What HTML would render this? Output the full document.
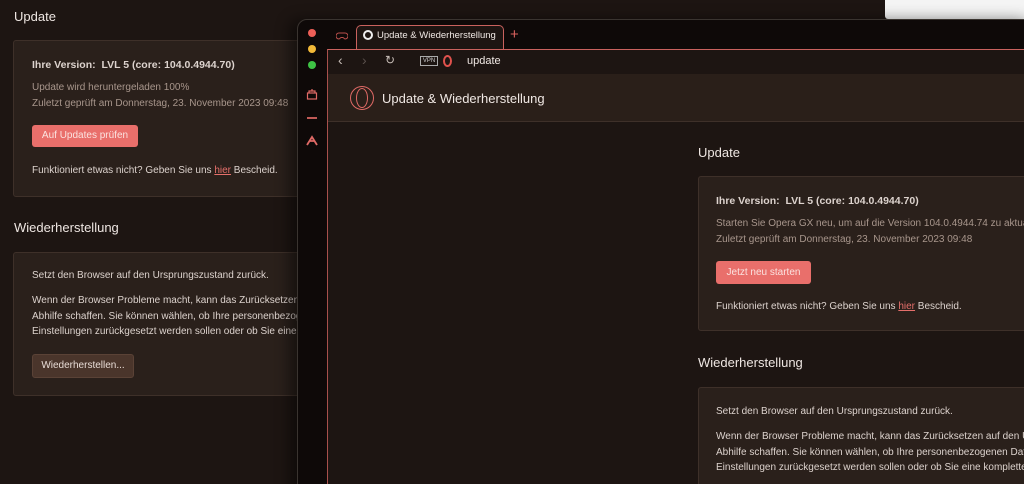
<!DOCTYPE html>
<html><head><meta charset="utf-8"><style>
*{margin:0;padding:0;box-sizing:border-box}
html,body{width:1024px;height:484px;overflow:hidden}
body{background:#1d1512;font-family:"Liberation Sans",sans-serif;color:#e8e0dc}
#wrap{position:relative;width:1024px;height:484px;overflow:hidden}
.abs{position:absolute}
.h{font-size:13px;color:#eee6e2}
.card{position:absolute;background:#2a201b;border:1px solid #3e3029;border-radius:3px}
.t{font-size:10px;line-height:16px;color:#ddd3ce;white-space:nowrap}
.g{color:#a8968c}
.b{font-weight:bold;font-size:10.5px}
.btn{position:absolute;background:#e96f6b;font-size:10px;border-radius:3px;text-align:center;color:#fbe3e0}
a{color:#e56f6b;text-decoration:underline}
</style></head><body><div id="wrap">
<div class="abs" style="left:885px;top:0;width:139px;height:19px;background:#f4f4f4;border-radius:0 0 0 3px"></div>
<div class="abs h" style="left:14px;top:9px">Update</div>
<div class="card" style="left:13px;top:40px;width:300px;height:157px"></div>
<div class="abs t b" style="left:32px;top:57px">Ihre Version:&nbsp; LVL 5 (core: 104.0.4944.70)</div>
<div class="abs t g" style="left:32px;top:80px">Update wird heruntergeladen 100%<br>Zuletzt geprüft am Donnerstag, 23. November 2023 09:48</div>
<div class="btn" style="left:32px;top:125px;width:106px;height:22px;line-height:22px">Auf Updates prüfen</div>
<div class="abs t" style="left:32px;top:163px">Funktioniert etwas nicht? Geben Sie uns <a>hier</a> Bescheid.</div>
<div class="abs h" style="left:14px;top:220px">Wiederherstellung</div>
<div class="card" style="left:13px;top:252px;width:300px;height:144px"></div>
<div class="abs t" style="left:32px;top:268px">Setzt den Browser auf den Ursprungszustand zurück.</div>
<div class="abs t" style="left:32px;top:293px;line-height:15.5px">Wenn der Browser Probleme macht, kann das Zurücksetzen<br>Abhilfe schaffen. Sie können wählen, ob Ihre personenbezog<br>Einstellungen zurückgesetzt werden sollen oder ob Sie eine</div>
<div class="abs" style="left:32px;top:354px;width:102px;height:24px;background:#4a352b;border:1px solid #5a4236;border-radius:3px;font-size:10px;line-height:22px;text-align:center;color:#e8dcd6">Wiederherstellen...</div>
<div class="abs" style="left:297px;top:19px;width:740px;height:480px;background:#0e0908;border:1px solid #3a3430;border-radius:10px;overflow:hidden;box-shadow:-8px 0 14px rgba(0,0,0,0.45)">
  <div class="abs" style="left:10px;top:9px;width:8px;height:8px;border-radius:50%;background:#ee5f57"></div>
  <div class="abs" style="left:10px;top:25px;width:8px;height:8px;border-radius:50%;background:#f2b938"></div>
  <div class="abs" style="left:10px;top:41px;width:8px;height:8px;border-radius:50%;background:#3ec345"></div>
  <svg class="abs" style="left:8px;top:68px" width="12" height="12" viewBox="0 0 12 12" fill="none" stroke="#e06a66" stroke-width="1.2"><rect x="1.5" y="5" width="9" height="6"/><path d="M3 5V3h6v2M6 3V1"/></svg>
  <div class="abs" style="left:9px;top:97px;width:10px;height:1.5px;background:#c05a56"></div>
  <svg class="abs" style="left:8px;top:114px" width="12" height="12" viewBox="0 0 12 12" fill="none" stroke="#e06a66" stroke-width="1.8"><path d="M1 11L6 3l5 8M4 7h5"/></svg>
  <svg class="abs" style="left:38px;top:12px" width="12" height="8" viewBox="0 0 12 8" fill="none" stroke="#b84f4b" stroke-width="1"><path d="M3 1h6a2.5 2.5 0 0 1 0 6l-2-1.5H5L3 7A2.5 2.5 0 0 1 3 1z"/></svg>
  <div class="abs" style="left:58px;top:5px;width:148px;height:25px;background:#1d1512;border:1px solid #c9625e;border-bottom:none;border-radius:5px 5px 0 0"></div>
  <div class="abs" style="left:65px;top:10px;width:10px;height:10px;border-radius:50%;border:2.5px solid #eee"></div>
  <div class="abs" style="left:79px;top:10px;font-size:9.5px;color:#f0e8e4">Update &amp; Wiederherstellung</div>
  <div class="abs" style="left:212px;top:6px;font-size:15px;color:#d9625e">+</div>
  <div class="abs" style="left:29px;top:29px;width:720px;height:460px;background:#1d1512;border-top:1px solid #c9625e;border-left:1px solid #a8504c"></div>
  <div class="abs" style="left:40px;top:32px;font-size:14px;color:#c8beb8">‹</div>
  <div class="abs" style="left:64px;top:32px;font-size:14px;color:#5a504c">›</div>
  <div class="abs" style="left:87px;top:33px;font-size:12px;color:#c8beb8">↻</div>
  <div class="abs" style="left:122px;top:36px;width:18px;height:10px;border:1px solid #aaa;font-size:6px;line-height:8px;text-align:center;color:#ccc">VPN</div>
  <div class="abs" style="left:145px;top:35px;width:9px;height:12px;border-radius:50%;border:2.5px solid #e0524d"></div>
  <div class="abs" style="left:169px;top:35px;font-size:11px;color:#f0e8e4">update</div>
  <div class="abs" style="left:30px;top:54px;width:720px;height:48px;background:#2a1f19;border-bottom:1px solid #3e3029"></div>
  <div class="abs" style="left:52px;top:66px;width:24px;height:24px;border-radius:50%;border:1.5px solid #e06a66"></div>
  <div class="abs" style="left:58px;top:68px;width:12px;height:20px;border-radius:50%;border:1.5px solid #e06a66"></div>
  <div class="abs" style="left:84px;top:71px;font-size:13px;color:#f0e8e4">Update &amp; Wiederherstellung</div>
</div>
<div class="abs h" style="left:698px;top:145px">Update</div>
<div class="card" style="left:698px;top:176px;width:340px;height:155px"></div>
<div class="abs t b" style="left:716px;top:193px">Ihre Version:&nbsp; LVL 5 (core: 104.0.4944.70)</div>
<div class="abs t g" style="left:716px;top:216px">Starten Sie Opera GX neu, um auf die Version 104.0.4944.74 zu aktualisieren<br>Zuletzt geprüft am Donnerstag, 23. November 2023 09:48</div>
<div class="btn" style="left:716px;top:261px;width:95px;height:23px;line-height:23px">Jetzt neu starten</div>
<div class="abs t" style="left:716px;top:299px">Funktioniert etwas nicht? Geben Sie uns <a>hier</a> Bescheid.</div>
<div class="abs h" style="left:698px;top:355px">Wiederherstellung</div>
<div class="card" style="left:698px;top:387px;width:340px;height:110px"></div>
<div class="abs t" style="left:716px;top:404px">Setzt den Browser auf den Ursprungszustand zurück.</div>
<div class="abs t" style="left:716px;top:429px;line-height:15.5px">Wenn der Browser Probleme macht, kann das Zurücksetzen auf den Ursprungszustand<br>Abhilfe schaffen. Sie können wählen, ob Ihre personenbezogenen Daten<br>Einstellungen zurückgesetzt werden sollen oder ob Sie eine komplette</div>
</div></body></html>
